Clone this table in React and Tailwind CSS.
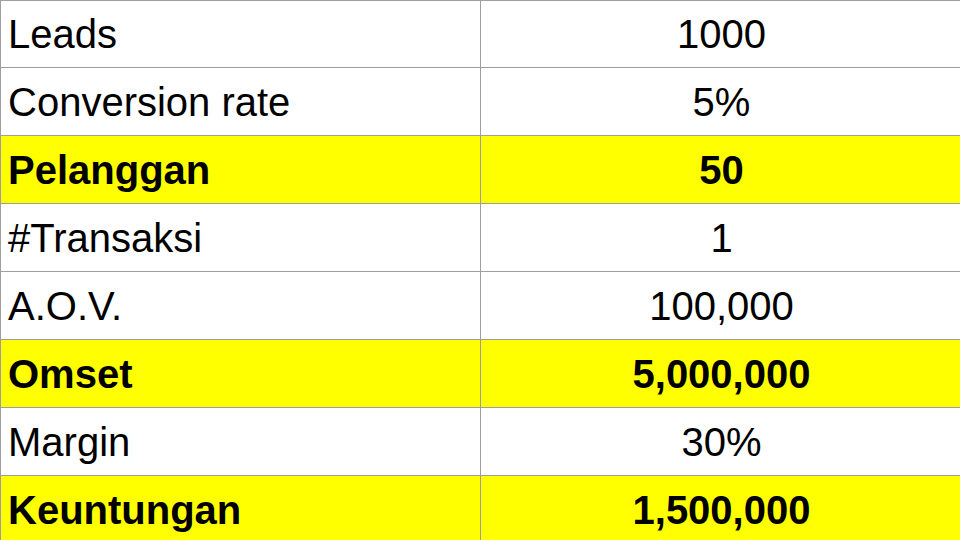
import React from "react";

const rows = [
  ["Leads", "1000", false],
  ["Conversion rate", "5%", false],
  ["Pelanggan", "50", true],
  ["#Transaksi", "1", false],
  ["A.O.V.", "100,000", false],
  ["Omset", "5,000,000", true],
  ["Margin", "30%", false],
  ["Keuntungan", "1,500,000", true],
];

export default function App() {
  return (
    <div
      className="w-[960px] h-[540px] overflow-hidden bg-white text-black"
      style={{ fontFamily: '"Liberation Sans", Arial, sans-serif' }}
    >
      <div className="w-[962px]">
        {rows.map(([label, value, hl], i) => (
          <div
            key={label}
            className={`flex h-[68px] border-b border-[#9e9e9e] ${i === 0 ? "border-t" : ""} ${
              hl ? "bg-[#ffff00] font-bold" : "bg-white"
            }`}
          >
            <div className="w-[481px] border-l border-r border-[#9e9e9e] flex items-center pl-[7px] text-[40px] leading-none">
              {label}
            </div>
            <div className="flex-1 flex items-center justify-center text-[40px] leading-none">
              {value}
            </div>
          </div>
        ))}
      </div>
    </div>
  );
}
